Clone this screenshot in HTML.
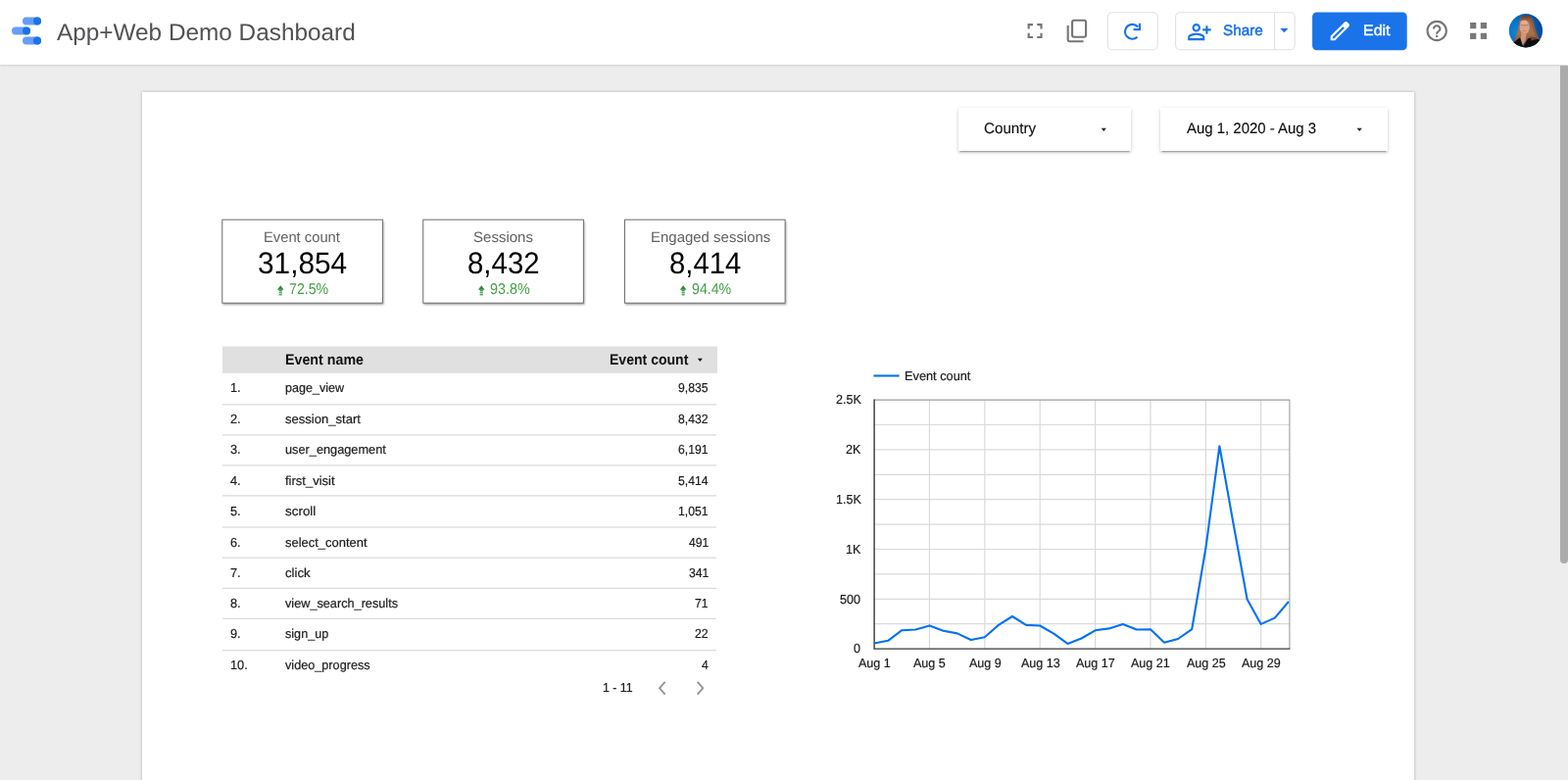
<!DOCTYPE html>
<html lang="en">
<head>
<meta charset="utf-8">
<title>App+Web Demo Dashboard</title>
<style>
*{box-sizing:border-box;margin:0;padding:0}
html,body{width:1600px;height:796px;overflow:hidden;background:#ededed;font-family:"Liberation Sans",sans-serif;color:#000}
.abs,section,header{position:absolute;left:0;top:0}
.t{position:absolute;white-space:nowrap;line-height:1;transform-origin:0 0;text-rendering:geometricPrecision}
header{width:1600px;height:66px;background:#fff;box-shadow:0 1px 2px rgba(0,0,0,.13);z-index:5}
#canvas{position:absolute;left:145px;top:94px;width:1298px;height:720px;background:#fff;box-shadow:0 0 3px rgba(0,0,0,.25)}
#sb{position:absolute;left:1592px;top:67px;width:8px;height:508px;border-radius:0 0 4px 4px;background:#ababab;z-index:6}
.filter{position:absolute;top:110px;height:44px;background:#fff;box-shadow:0 3px 1px -2px rgba(0,0,0,.2),0 2px 2px 0 rgba(0,0,0,.14),0 1px 5px 0 rgba(0,0,0,.12)}
</style>
</head>
<body>
<div id="sb"></div>
<header>
  <svg class="abs" width="1600" height="66" viewBox="0 0 1600 66">
    <g>
      <rect x="23" y="17.5" width="19" height="8" rx="4" fill="#669df6"/><circle cx="38" cy="21.5" r="4" fill="#1a73e8"/>
      <rect x="12" y="27.5" width="19" height="8" rx="4" fill="#669df6"/><circle cx="27" cy="31.5" r="4" fill="#1a73e8"/>
      <rect x="23" y="37.5" width="19" height="8" rx="4" fill="#669df6"/><circle cx="38" cy="41.5" r="4" fill="#1a73e8"/>
    </g>
    <path transform="translate(1043.26 18.76) scale(1.07)" fill="#757575" d="M7 14H5v5h5v-2H7v-3zm-2-4h2V7h3V5H5v5zm12 7h-3v2h5v-5h-2v3zM14 5v2h3v3h2V5h-5z"/>
    <g fill="none" stroke="#757575" stroke-width="2.1">
      <rect x="1094.1" y="20.8" width="14" height="17" rx="2"/>
      <path d="M1089.7 26.1V40.2a2 2 0 0 0 2 2H1105.6"/>
    </g>
    <rect x="1130.25" y="12.75" width="51" height="38" rx="4.5" fill="#fff" stroke="#dfe1e5" stroke-width="1.1"/>
    <g transform="translate(1142.66 19.46) scale(1.07)" fill="none" stroke="#1a73e8" stroke-width="2"><path d="M17.36 7.50A7 7 0 1 0 16.77 17.12"/><path d="M19 4V10H13"/></g>
    <rect x="1199.6" y="12.75" width="121.6" height="38" rx="4.5" fill="#fff" stroke="#dfe1e5" stroke-width="1.1"/>
    <path d="M1300.6 13V50.5" stroke="#dfe1e5" stroke-width="1.1"/>
    <path transform="translate(1211.10 19.74) scale(1.07)" fill="#1a73e8" d="M18 14v-3h-3V9h3V6h2v3h3v2h-3v3h-2Zm-9-2q-1.65 0-2.825-1.175T5 8q0-1.65 1.175-2.825T9 4q1.65 0 2.825 1.175T13 8q0 1.65-1.175 2.825T9 12Zm-8 8v-2.8q0-.85.438-1.563T2.6 14.55q1.55-.775 3.15-1.163T9 13q1.65 0 3.25.387t3.15 1.163q.725.375 1.163 1.088T17 17.2V20H1Zm2-2h12v-.8q0-.275-.138-.5t-.362-.35q-1.35-.675-2.725-1.012T9 15q-1.4 0-2.775.338T3.5 16.35q-.225.125-.363.35T3 17.2v.8Zm6-8q.825 0 1.413-.587T11 8q0-.825-.587-1.413T9 6q-.825 0-1.413.587T7 8q0 .825.587 1.413T9 10Z"/>
    <path d="M1306.25 28.9h8.3l-4.15 4.4z" fill="#1a73e8"/>
    <rect x="1339.1" y="12.5" width="96.6" height="38.7" rx="4.5" fill="#1a73e8"/>
    <path transform="translate(1354.50 18.90) scale(1.07)" fill="#fff" d="M5 19h1.425L16.2 9.225 14.775 7.8 5 17.575V19Zm-2 2v-4.25L16.2 3.575q.3-.275.663-.425t.762-.15q.4 0 .775.15t.65.45L20.425 5q.3.275.438.65T21 6.4q0 .4-.137.763t-.438.662L7.25 21H3Z"/>
    <path transform="translate(1453.36 18.71) scale(1.07)" fill="#757575" d="M11 18h2v-2h-2v2zm1-16C6.48 2 2 6.48 2 12s4.48 10 10 10 10-4.48 10-10S17.52 2 12 2zm0 18c-4.41 0-8-3.59-8-8s3.59-8 8-8 8 3.59 8 8-3.59 8-8 8zm0-14c-2.21 0-4 1.79-4 4h2c0-1.1.9-2 2-2s2 .9 2 2c0 2-3 1.75-3 5h2c0-2.25 3-2.5 3-5 0-2.21-1.79-4-4-4z"/>
    <g fill="#787878"><rect x="1500.1" y="23" width="6.2" height="6.2"/><rect x="1510.8" y="23" width="6.2" height="6.2"/><rect x="1500.1" y="33.75" width="6.2" height="6.2"/><rect x="1510.8" y="33.75" width="6.2" height="6.2"/></g>
    <defs><clipPath id="av"><circle cx="390" cy="380" r="248"/></clipPath>
    <radialGradient id="avbg" gradientUnits="userSpaceOnUse" cx="250" cy="400" r="420"><stop offset="0" stop-color="#0b86da"/><stop offset="0.55" stop-color="#0768bd"/><stop offset="1" stop-color="#033f8e"/></radialGradient>
    <linearGradient id="avh" gradientUnits="userSpaceOnUse" x1="0" y1="150" x2="0" y2="600"><stop offset="0" stop-color="#5e3723"/><stop offset="0.2" stop-color="#a06a48"/><stop offset="0.6" stop-color="#a9704c"/><stop offset="1" stop-color="#7c4a30"/></linearGradient>
    <filter id="avf" x="-10%" y="-10%" width="120%" height="120%"><feGaussianBlur stdDeviation="9"/></filter></defs>
    <g transform="translate(1530 5) scale(0.0691)">
      <circle cx="390" cy="380" r="248" fill="url(#avbg)"/>
      <g clip-path="url(#av)"><g filter="url(#avf)">
        <path d="M390 152C322 152 296 205 291 262C285 340 262 420 212 548L330 640L610 540C565 475 532 385 512 292C500 212 468 152 390 152Z" fill="url(#avh)"/>
        <path d="M440 200C480 260 490 380 540 470L575 500C540 420 520 330 505 270C495 225 470 200 440 200Z" fill="#8a5233" opacity=".7"/>
        <ellipse cx="372" cy="328" rx="74" ry="102" fill="#d9a389"/>
        <ellipse cx="362" cy="262" rx="52" ry="30" fill="#e0ad92"/>
        <path d="M312 292h120v16h-120z" fill="#9a6a58" opacity=".55"/>
        <path d="M340 378h60v12h-60z" fill="#b0685e" opacity=".6"/>
        <path d="M325 410L400 410L385 520L338 608L308 520Z" fill="#cf9679"/>
        <path d="M200 560L305 480L350 615L300 660Z" fill="#0e0e10"/>
        <path d="M350 615L420 500L470 480L620 520L620 660L340 660Z" fill="#0e0e10"/>
        <path d="M455 470C500 480 540 470 575 500L470 530Z" fill="#6e4229"/>
      </g></g>
    </g>
  </svg>
  <span class="t" style="left:58.00px;top:22px;font-size:24px;color:#505255;transform:scaleX(1.0144)">App+Web Demo Dashboard</span>
  <span class="t" style="left:1248.01px;top:24px;font-size:15.2px;color:#1a73e8;transform:scaleX(1.0050);-webkit-text-stroke:0.55px #1a73e8">Share</span>
  <span class="t" style="left:1391.05px;top:24px;font-size:15.2px;color:#fff;transform:scaleX(1.0500);-webkit-text-stroke:0.42px #fff">Edit</span>
</header>
<main id="canvas"></main>
<section id="filters">
  <div class="filter" style="left:978px;width:176px"></div>
  <div class="filter" style="left:1184px;width:232px"></div>
  <svg class="abs" width="1600" height="170" viewBox="0 0 1600 170"><path d="M1123.700 130.800h5.200l-2.600 3.100z" fill="#222"/><path d="M1384.600 130.800h5.200l-2.600 3.100z" fill="#222"/></svg>
  <span class="t" style="left:1003.74px;top:124px;font-size:15.3px;color:#111;transform:scaleX(0.9925);-webkit-text-stroke:0.15px #111">Country</span>
  <span class="t" style="left:1210.90px;top:124px;font-size:15.3px;color:#111;transform:scaleX(0.9772);-webkit-text-stroke:0.15px #111">Aug 1, 2020 - Aug 3</span>
</section>
<section id="cards">

  <svg class="abs" width="1600" height="320" viewBox="0 0 1600 320"><defs><filter id="csh" x="-5%" y="-10%" width="110%" height="125%"><feGaussianBlur stdDeviation="1.1"/></filter></defs><rect x="227.3" y="225.6" width="164.2" height="85.4" fill="#000" opacity=".38" filter="url(#csh)"/><rect x="226.8" y="224.2" width="163.6" height="85" fill="#fff" stroke="#707070" stroke-width="1"/><rect x="432.3" y="225.6" width="164.2" height="85.4" fill="#000" opacity=".38" filter="url(#csh)"/><rect x="431.8" y="224.2" width="163.6" height="85" fill="#fff" stroke="#707070" stroke-width="1"/><rect x="638.0" y="225.6" width="164.2" height="85.4" fill="#000" opacity=".38" filter="url(#csh)"/><rect x="637.5" y="224.2" width="163.6" height="85" fill="#fff" stroke="#707070" stroke-width="1"/><path d="M286.25 291.3l3 3.9q.2.5-.4.5h-5.2q-.6 0-.4-.5z" fill="#2e8b3a"/><g fill="#3f9a49"><rect x="284.65" y="295.7" width="3.2" height="1.7"/><rect x="284.65" y="297.9" width="3.2" height="1.5" opacity=".85"/><rect x="284.65" y="299.9" width="3.2" height="1.6" opacity=".85"/></g><path d="M491.25 291.3l3 3.9q.2.5-.4.5h-5.2q-.6 0-.4-.5z" fill="#2e8b3a"/><g fill="#3f9a49"><rect x="489.65" y="295.7" width="3.2" height="1.7"/><rect x="489.65" y="297.9" width="3.2" height="1.5" opacity=".85"/><rect x="489.65" y="299.9" width="3.2" height="1.6" opacity=".85"/></g><path d="M697.15 291.3l3 3.9q.2.5-.4.5h-5.2q-.6 0-.4-.5z" fill="#2e8b3a"/><g fill="#3f9a49"><rect x="695.55" y="295.7" width="3.2" height="1.7"/><rect x="695.55" y="297.9" width="3.2" height="1.5" opacity=".85"/><rect x="695.55" y="299.9" width="3.2" height="1.6" opacity=".85"/></g></svg>
  <span class="t" style="left:269.19px;top:235px;font-size:15.0px;color:#616161;transform:scaleX(0.9833)">Event count</span>
  <span class="t" style="left:483.33px;top:235px;font-size:15.0px;color:#616161;transform:scaleX(1.0022)">Sessions</span>
  <span class="t" style="left:663.67px;top:235px;font-size:15.0px;color:#616161;transform:scaleX(0.9978)">Engaged sessions</span>
  <span class="t" style="left:262.62px;top:253px;font-size:31.0px;color:#000;transform:scaleX(0.9615)">31,854</span>
  <span class="t" style="left:477.23px;top:253px;font-size:31.0px;color:#000;transform:scaleX(0.9496)">8,432</span>
  <span class="t" style="left:682.64px;top:253px;font-size:31.0px;color:#000;transform:scaleX(0.9438)">8,414</span>
  <span class="t" style="left:294.70px;top:288px;font-size:15.7px;color:#43a047;transform:scaleX(0.9046)">72.5%</span>
  <span class="t" style="left:499.69px;top:288px;font-size:15.7px;color:#43a047;transform:scaleX(0.9138)">93.8%</span>
  <span class="t" style="left:706.00px;top:288px;font-size:15.7px;color:#43a047;transform:scaleX(0.9046)">94.4%</span>
</section>
<section id="table">
  <svg class="abs" width="1600" height="796" viewBox="0 0 1600 796"><rect x="227" y="353.5" width="505" height="27.3" fill="#e0e0e0"/><g fill="#dadada"><rect x="227" y="412.26" width="504" height="1.2"/><rect x="227" y="443.30" width="504" height="1.2"/><rect x="227" y="474.30" width="504" height="1.2"/><rect x="227" y="505.25" width="504" height="1.2"/><rect x="227" y="537.40" width="504" height="1.2"/><rect x="227" y="568.60" width="504" height="1.2"/><rect x="227" y="599.75" width="504" height="1.2"/><rect x="227" y="630.80" width="504" height="1.2"/><rect x="227" y="663.10" width="504" height="1.2"/></g><path d="M711.900 365.800h4.900l-2.450 3.100z" fill="#111"/><g fill="none" stroke="#959595" stroke-width="1.900"><path d="M678.600 695.900l-5.500 6.350 5.500 6.350"/><path d="M711.700 695.900l5.500 6.350-5.500 6.350"/></g></svg>
  <span class="t" style="left:290.66px;top:360px;font-size:15.2px;color:#111;transform:scaleX(0.9382);font-weight:bold">Event name</span>
  <span class="t" style="left:622.08px;top:360px;font-size:15.2px;color:#111;transform:scaleX(0.9245);font-weight:bold">Event count</span>
  <span class="t" style="left:235.35px;top:389px;font-size:13.0px;color:#1c1c1c;transform:scaleX(0.9833);-webkit-text-stroke:0.2px #1c1c1c">1.</span>
  <span class="t" style="left:291.45px;top:389px;font-size:13.0px;color:#1c1c1c;transform:scaleX(0.9665);-webkit-text-stroke:0.2px #1c1c1c">page_view</span>
  <span class="t" style="left:692.49px;top:389px;font-size:13.0px;color:#1c1c1c;transform:scaleX(0.9375);-webkit-text-stroke:0.2px #1c1c1c">9,835</span>
  <span class="t" style="left:235.35px;top:421px;font-size:13.0px;color:#1c1c1c;transform:scaleX(0.9833);-webkit-text-stroke:0.2px #1c1c1c">2.</span>
  <span class="t" style="left:291.45px;top:421px;font-size:13.0px;color:#1c1c1c;transform:scaleX(1.0048);-webkit-text-stroke:0.2px #1c1c1c">session_start</span>
  <span class="t" style="left:692.49px;top:421px;font-size:13.0px;color:#1c1c1c;transform:scaleX(0.9375);-webkit-text-stroke:0.2px #1c1c1c">8,432</span>
  <span class="t" style="left:235.35px;top:452px;font-size:13.0px;color:#1c1c1c;transform:scaleX(0.9833);-webkit-text-stroke:0.2px #1c1c1c">3.</span>
  <span class="t" style="left:291.45px;top:452px;font-size:13.0px;color:#1c1c1c;transform:scaleX(0.9805);-webkit-text-stroke:0.2px #1c1c1c">user_engagement</span>
  <span class="t" style="left:692.49px;top:452px;font-size:13.0px;color:#1c1c1c;transform:scaleX(0.9375);-webkit-text-stroke:0.2px #1c1c1c">6,191</span>
  <span class="t" style="left:235.35px;top:484px;font-size:13.0px;color:#1c1c1c;transform:scaleX(0.9833);-webkit-text-stroke:0.2px #1c1c1c">4.</span>
  <span class="t" style="left:291.45px;top:484px;font-size:13.0px;color:#1c1c1c;transform:scaleX(1.0007);-webkit-text-stroke:0.2px #1c1c1c">first_visit</span>
  <span class="t" style="left:692.49px;top:484px;font-size:13.0px;color:#1c1c1c;transform:scaleX(0.9375);-webkit-text-stroke:0.2px #1c1c1c">5,414</span>
  <span class="t" style="left:235.35px;top:515px;font-size:13.0px;color:#1c1c1c;transform:scaleX(0.9833);-webkit-text-stroke:0.2px #1c1c1c">5.</span>
  <span class="t" style="left:291.45px;top:515px;font-size:13.0px;color:#1c1c1c;transform:scaleX(1.0330);-webkit-text-stroke:0.2px #1c1c1c">scroll</span>
  <span class="t" style="left:692.49px;top:515px;font-size:13.0px;color:#1c1c1c;transform:scaleX(0.9375);-webkit-text-stroke:0.2px #1c1c1c">1,051</span>
  <span class="t" style="left:235.35px;top:547px;font-size:13.0px;color:#1c1c1c;transform:scaleX(0.9833);-webkit-text-stroke:0.2px #1c1c1c">6.</span>
  <span class="t" style="left:291.45px;top:547px;font-size:13.0px;color:#1c1c1c;transform:scaleX(0.9968);-webkit-text-stroke:0.2px #1c1c1c">select_content</span>
  <span class="t" style="left:702.65px;top:547px;font-size:13.0px;color:#1c1c1c;transform:scaleX(0.9375);-webkit-text-stroke:0.2px #1c1c1c">491</span>
  <span class="t" style="left:235.35px;top:578px;font-size:13.0px;color:#1c1c1c;transform:scaleX(0.9833);-webkit-text-stroke:0.2px #1c1c1c">7.</span>
  <span class="t" style="left:291.45px;top:578px;font-size:13.0px;color:#1c1c1c;transform:scaleX(1.0120);-webkit-text-stroke:0.2px #1c1c1c">click</span>
  <span class="t" style="left:702.65px;top:578px;font-size:13.0px;color:#1c1c1c;transform:scaleX(0.9375);-webkit-text-stroke:0.2px #1c1c1c">341</span>
  <span class="t" style="left:235.35px;top:609px;font-size:13.0px;color:#1c1c1c;transform:scaleX(0.9833);-webkit-text-stroke:0.2px #1c1c1c">8.</span>
  <span class="t" style="left:291.45px;top:609px;font-size:13.0px;color:#1c1c1c;transform:scaleX(0.9767);-webkit-text-stroke:0.2px #1c1c1c">view_search_results</span>
  <span class="t" style="left:709.44px;top:609px;font-size:13.0px;color:#1c1c1c;transform:scaleX(0.9375);-webkit-text-stroke:0.2px #1c1c1c">71</span>
  <span class="t" style="left:235.35px;top:640px;font-size:13.0px;color:#1c1c1c;transform:scaleX(0.9833);-webkit-text-stroke:0.2px #1c1c1c">9.</span>
  <span class="t" style="left:291.45px;top:640px;font-size:13.0px;color:#1c1c1c;transform:scaleX(0.9711);-webkit-text-stroke:0.2px #1c1c1c">sign_up</span>
  <span class="t" style="left:709.44px;top:640px;font-size:13.0px;color:#1c1c1c;transform:scaleX(0.9375);-webkit-text-stroke:0.2px #1c1c1c">22</span>
  <span class="t" style="left:235.35px;top:672px;font-size:13.0px;color:#1c1c1c;transform:scaleX(0.9833);-webkit-text-stroke:0.2px #1c1c1c">10.</span>
  <span class="t" style="left:291.45px;top:672px;font-size:13.0px;color:#1c1c1c;transform:scaleX(0.9744);-webkit-text-stroke:0.2px #1c1c1c">video_progress</span>
  <span class="t" style="left:716.22px;top:672px;font-size:13.0px;color:#1c1c1c;transform:scaleX(0.9375);-webkit-text-stroke:0.2px #1c1c1c">4</span>
  <span class="t" style="left:614.55px;top:695px;font-size:13.0px;color:#1c1c1c;transform:scaleX(0.9516);-webkit-text-stroke:0.2px #1c1c1c">1 - 11</span>
</section>
<section id="chart">
<svg class="abs" width="1600" height="796" viewBox="0 0 1600 796">
<g stroke="#dadada" stroke-width="1.200" fill="none">
<path d="M892.1 636.70H1315.9"/>
<path d="M892.1 611.30H1315.9"/>
<path d="M892.1 585.90H1315.9"/>
<path d="M892.1 560.50H1315.9"/>
<path d="M892.1 535.10H1315.9"/>
<path d="M892.1 509.70H1315.9"/>
<path d="M892.1 484.30H1315.9"/>
<path d="M892.1 458.90H1315.9"/>
<path d="M892.1 433.50H1315.9"/>
<path d="M948.47 408.1V662.1"/>
<path d="M1004.84 408.1V662.1"/>
<path d="M1061.21 408.1V662.1"/>
<path d="M1117.59 408.1V662.1"/>
<path d="M1173.96 408.1V662.1"/>
<path d="M1230.33 408.1V662.1"/>
<path d="M1286.70 408.1V662.1"/>
</g>
<path d="M892.1 408.1H1315.9V662.1" fill="none" stroke="#9e9e9e" stroke-width="1.100"/>
<path d="M892.1 407.6V662.1H1316.4" fill="none" stroke="#383838" stroke-width="1.400"/>
<polyline points="892.1,656.5 906.2,653.8 920.3,643.2 934.4,642.5 948.5,638.4 962.6,643.7 976.7,646.4 990.8,653.0 1004.8,650.2 1018.9,637.9 1033.0,629.0 1047.1,637.9 1061.2,638.5 1075.3,646.7 1089.4,656.9 1103.5,651.5 1117.6,643.3 1131.7,641.4 1145.8,636.9 1159.9,642.5 1174.0,642.3 1188.0,655.7 1202.1,652.0 1216.2,642.2 1230.3,559.8 1244.4,455.2 1258.5,534.2 1272.6,611.5 1286.7,636.9 1300.8,630.6 1314.9,614.0" fill="none" stroke="#0072f0" stroke-width="2.100" stroke-linejoin="round"/>
<path d="M891.500 383.500H917.600" stroke="#0072f0" stroke-width="2.100"/>
</svg>
  <span class="t" style="left:922.52px;top:377px;font-size:13.0px;color:#1c1c1c;transform:scaleX(0.9813);-webkit-text-stroke:0.2px #1c1c1c">Event count</span>
  <span class="t" style="left:871.42px;top:655px;font-size:13.0px;color:#1c1c1c;transform:scaleX(0.9651);-webkit-text-stroke:0.2px #1c1c1c">0</span>
  <span class="t" style="left:857.45px;top:605px;font-size:13.0px;color:#1c1c1c;transform:scaleX(0.9651);-webkit-text-stroke:0.2px #1c1c1c">500</span>
  <span class="t" style="left:863.05px;top:554px;font-size:13.0px;color:#1c1c1c;transform:scaleX(0.9651);-webkit-text-stroke:0.2px #1c1c1c">1K</span>
  <span class="t" style="left:852.58px;top:503px;font-size:13.0px;color:#1c1c1c;transform:scaleX(0.9651);-webkit-text-stroke:0.2px #1c1c1c">1.5K</span>
  <span class="t" style="left:863.05px;top:452px;font-size:13.0px;color:#1c1c1c;transform:scaleX(0.9651);-webkit-text-stroke:0.2px #1c1c1c">2K</span>
  <span class="t" style="left:852.58px;top:401px;font-size:13.0px;color:#1c1c1c;transform:scaleX(0.9651);-webkit-text-stroke:0.2px #1c1c1c">2.5K</span>
  <span class="t" style="left:876.00px;top:670px;font-size:13.0px;color:#1c1c1c;transform:scaleX(0.9651);-webkit-text-stroke:0.2px #1c1c1c">Aug 1</span>
  <span class="t" style="left:932.37px;top:670px;font-size:13.0px;color:#1c1c1c;transform:scaleX(0.9651);-webkit-text-stroke:0.2px #1c1c1c">Aug 5</span>
  <span class="t" style="left:988.74px;top:670px;font-size:13.0px;color:#1c1c1c;transform:scaleX(0.9651);-webkit-text-stroke:0.2px #1c1c1c">Aug 9</span>
  <span class="t" style="left:1041.63px;top:670px;font-size:13.0px;color:#1c1c1c;transform:scaleX(0.9651);-webkit-text-stroke:0.2px #1c1c1c">Aug 13</span>
  <span class="t" style="left:1098.00px;top:670px;font-size:13.0px;color:#1c1c1c;transform:scaleX(0.9651);-webkit-text-stroke:0.2px #1c1c1c">Aug 17</span>
  <span class="t" style="left:1154.37px;top:670px;font-size:13.0px;color:#1c1c1c;transform:scaleX(0.9651);-webkit-text-stroke:0.2px #1c1c1c">Aug 21</span>
  <span class="t" style="left:1210.75px;top:670px;font-size:13.0px;color:#1c1c1c;transform:scaleX(0.9651);-webkit-text-stroke:0.2px #1c1c1c">Aug 25</span>
  <span class="t" style="left:1267.12px;top:670px;font-size:13.0px;color:#1c1c1c;transform:scaleX(0.9651);-webkit-text-stroke:0.2px #1c1c1c">Aug 29</span>
</section>
</body>
</html>
